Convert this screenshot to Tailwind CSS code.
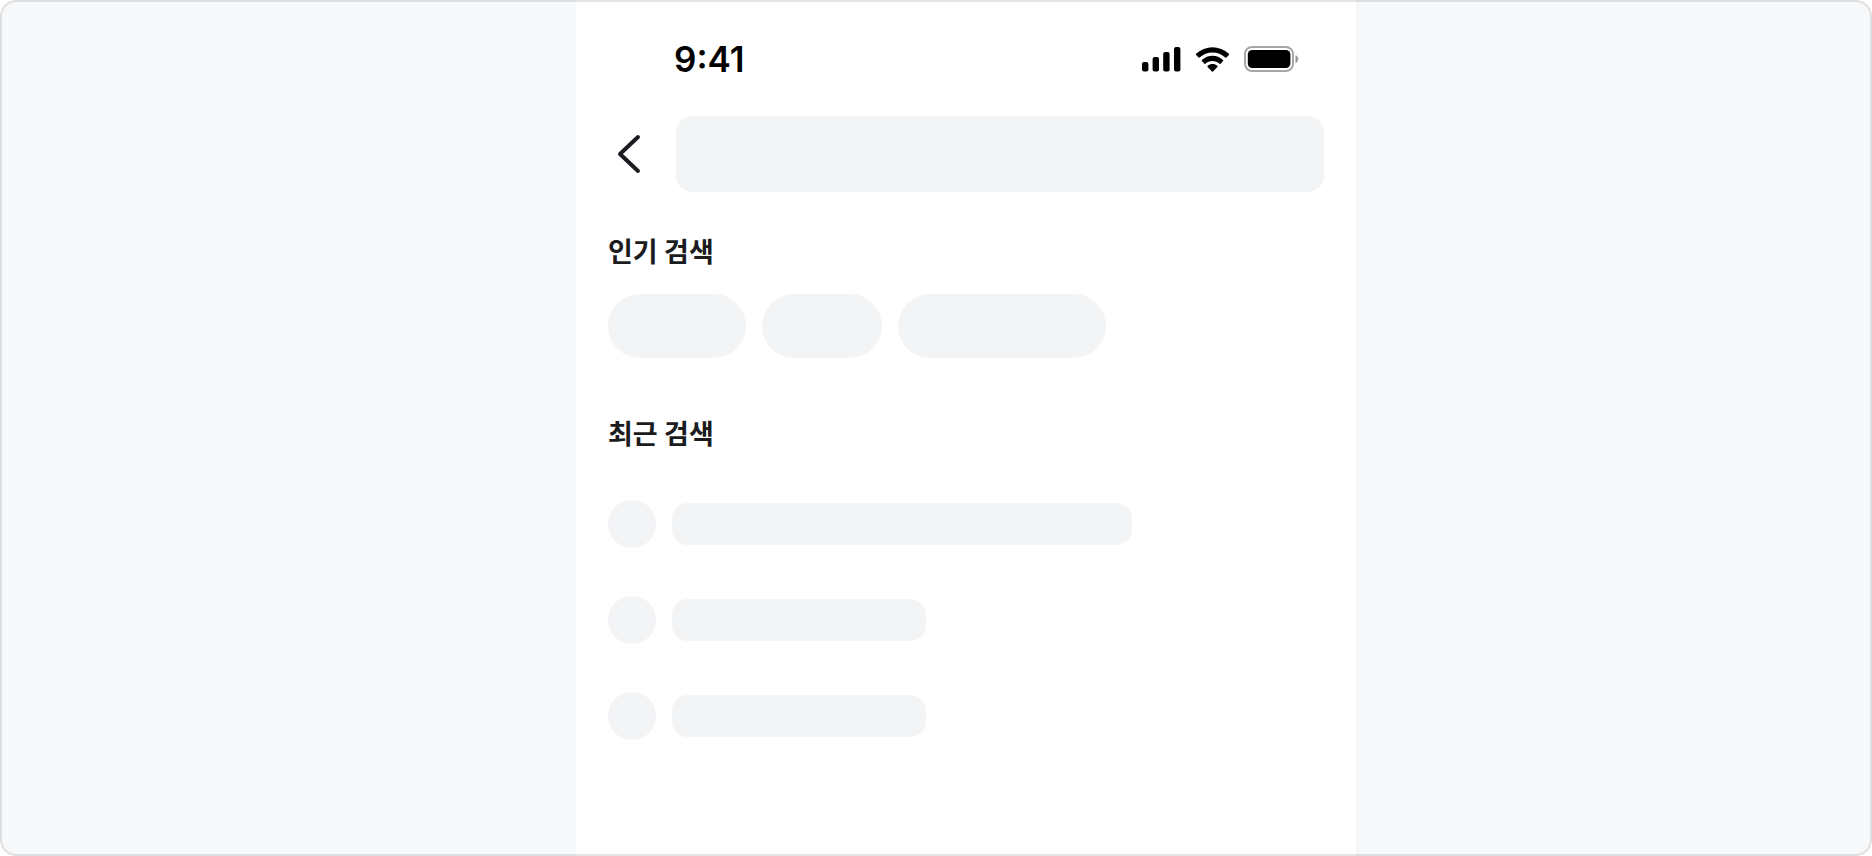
<!DOCTYPE html>
<html lang="ko">
<head>
    <meta charset="UTF-8">
    <meta name="viewport" content="width=device-width, initial-scale=1.0">
    <title>검색</title>
    <script src="https://cdn.jsdelivr.net/npm/@tailwindcss/browser@4"></script>
</head>
<body class="bg-white">

    <div class="relative flex justify-center min-h-screen lg:pl-[60px] bg-[#f7f8fa] rounded-2xl overflow-hidden">

        <!-- Phone screen -->
        <main class="w-full max-w-[780px] bg-white text-[#1a1c20] font-['Inter','Noto_Sans_CJK_KR',sans-serif]">

            <!-- Status bar -->
            <div class="flex items-center justify-between h-[116px] pt-0.5 pl-[98px] pr-14 text-black">
                <span class="text-[35px] leading-10 font-semibold">9:41</span>
                <div class="flex items-center gap-3.5">
                    <svg class="w-10 h-[26px]" viewBox="0 0 40 26" fill="currentColor">
                        <rect x="0" y="16" width="6.4" height="9.400" rx="2"/>
                        <rect x="10.600" y="11" width="6.4" height="14.400" rx="2"/>
                        <rect x="21.2" y="6" width="6.4" height="19.400" rx="2"/>
                        <rect x="32" y="1" width="6.4" height="24.400" rx="2"/>
                    </svg>
                    <svg class="w-[34px] h-[26px]" viewBox="0 0 34 26" fill="currentColor">
                        <path d="M16.500 6.400c4.800 0 9.400 1.900 12.900 5.200.3.300.7.300 1 0l2.500-2.700c.3-.3.300-.8 0-1.100-9.200-8.900-23.600-8.900-32.800 0-.3.300-.3.800 0 1.100l2.500 2.700c.3.300.7.300 1 0 3.500-3.300 8.100-5.200 12.900-5.200z"/>
                        <path d="M16.500 15c2.600 0 5.100 1 7.100 2.800.3.300.7.300 1 0l2.500-2.700c.3-.3.300-.8 0-1.100-6-5.700-15.200-5.700-21.200 0-.3.300-.3.800 0 1.100l2.500 2.700c.3.300.7.300 1 0 2-1.800 4.500-2.800 7.100-2.800z"/>
                        <path d="M21.400 21c.3-.3.300-.8 0-1.100-2.800-2.500-7-2.500-9.800 0-.3.300-.3.800 0 1.100l4.300 4.600c.3.300.8.300 1.100 0z"/>
                    </svg>
                    <svg class="w-14 h-[26px]" viewBox="0 0 56 26" fill="currentColor">
                        <rect x="1" y="1" width="48" height="24" rx="7" fill="none" stroke="currentColor" stroke-width="2" opacity=".35"/>
                        <rect x="3.800" y="4" width="42.600" height="18" rx="4.500"/>
                        <path d="M51.500 9v8.200c1.700-.7 2.800-2.300 2.800-4.100s-1.100-3.400-2.800-4.100z" opacity=".4"/>
                    </svg>
                </div>
            </div>

            <!-- Search header -->
            <div class="flex items-center gap-8 px-8">
                <button type="button" aria-label="뒤로" class="flex shrink-0 items-center w-9 h-12">
                    <svg class="w-9 h-12" viewBox="0 0 36 48" fill="none" stroke="currentColor" stroke-width="4" stroke-linecap="round" stroke-linejoin="round">
                        <path d="M30 7 12 24l18 17"/>
                    </svg>
                </button>
                <input type="search" aria-label="검색" class="min-w-0 flex-1 h-[76px] px-6 rounded-2xl bg-[#f3f4f6] text-[27px] outline-none">
            </div>

            <!-- Popular searches -->
            <section class="px-8 pt-[41px]">
                <h2 class="text-[27px] leading-10 font-bold">인기 검색</h2>
                <div class="flex flex-wrap gap-4 mt-[21px]">
                    <div class="w-[138px] h-16 rounded-full bg-[#f3f4f6]"></div>
                    <div class="w-[120px] h-16 rounded-full bg-[#f3f4f6]"></div>
                    <div class="w-52 h-16 rounded-full bg-[#f3f4f6]"></div>
                </div>
            </section>

            <!-- Recent searches -->
            <section class="px-8 pt-[57px] pb-16">
                <h2 class="text-[27px] leading-10 font-bold">최근 검색</h2>
                <ul class="flex flex-col gap-12 mt-[45px]">
                    <li class="flex items-center gap-4">
                        <div class="shrink-0 size-12 rounded-full bg-[#f3f4f6]"></div>
                        <div class="w-[460px] h-[42px] rounded-2xl bg-[#f3f4f6]"></div>
                    </li>
                    <li class="flex items-center gap-4">
                        <div class="shrink-0 size-12 rounded-full bg-[#f3f4f6]"></div>
                        <div class="w-[254px] h-[42px] rounded-2xl bg-[#f3f4f6]"></div>
                    </li>
                    <li class="flex items-center gap-4">
                        <div class="shrink-0 size-12 rounded-full bg-[#f3f4f6]"></div>
                        <div class="w-[254px] h-[42px] rounded-2xl bg-[#f3f4f6]"></div>
                    </li>
                </ul>
            </section>
        </main>

        <!-- Frame outline -->
        <div class="absolute inset-0 rounded-2xl border-2 border-black/10 pointer-events-none"></div>
    </div>

</body>
</html>
